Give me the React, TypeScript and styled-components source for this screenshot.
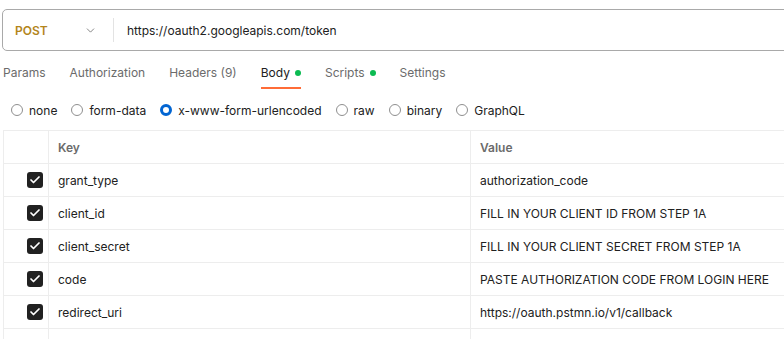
import styled, { createGlobalStyle } from "styled-components";
import { ChevronDown, Check } from "lucide-react";

const GlobalStyle = createGlobalStyle`
    html, body {
        margin:0;
        padding:0;
        background:#ffffff;
        overflow:hidden;
    }
    body {
        font-family: Inter, "Noto Sans", "Liberation Sans", sans-serif;
        font-size:12px;
        color:#212121;
    }
`
const Page = styled.div`
    width:784px;
    height:339px;
    overflow:hidden;
`
const UrlBar = styled.div`
    display:flex;
    align-items:center;
    box-sizing:border-box;
    width:820px;
    height:42px;
    margin:9px 0 0 2px;
    border:1px solid #a9a9a9;
    border-radius:5px;
`
const MethodSelect = styled.div`
    display:flex;
    align-items:center;
    justify-content:space-between;
    box-sizing:border-box;
    width:110px;
    padding:0 16px 0 12px;
    color:#b3851b;
    font-weight:600;
    font-size:12px;
`
const Divider = styled.div`
    width:1px;
    height:24px;
    background:#e3e3e3;
`
const UrlText = styled.div`
    padding-left:13px;
    font-size:12px;
    color:#212121;
`
const Tabs = styled.div`
    display:flex;
    gap:24px;
    margin:7px 0 0 3px;
`
const Tab = styled.div<{ $active?: boolean }>`
    display:flex;
    align-items:center;
    gap:5px;
    padding:7px 0 6px;
    line-height:16px;
    font-size:12px;
    color:${(p) => (p.$active ? "#212121" : "#6b6b6b")};
    border-bottom:2px solid ${(p) => (p.$active ? "#ff6c37" : "transparent")};
`
const Dot = styled.span`
    width:6px;
    height:6px;
    border-radius:50%;
    background:#0cbb52;
`
const RadioRow = styled.div`
    display:flex;
    align-items:center;
    gap:14px;
    height:18px;
    margin:12px 0 0 11px;
`
const RadioItem = styled.label`
    display:flex;
    align-items:center;
    gap:6px;
    font-size:12px;
    color:#212121;
`
const RadioCircle = styled.span<{ $checked?: boolean }>`
    box-sizing:border-box;
    width:12px;
    height:12px;
    border-radius:50%;
    border:${(p) => (p.$checked ? "3.5px solid #0265d2" : "1px solid #8f8f8f")};
    background:#fff;
`
const Table = styled.div`
    margin:11px 0 0 3px;
    width:840px;
    border-top:1px solid #ededed;
    border-left:1px solid #ededed;
`
const Row = styled.div`
    display:grid;
    grid-template-columns:45px 422px 1fr;
    height:33px;
    box-sizing:border-box;
    border-bottom:1px solid #ededed;
`
const Cell = styled.div<{ $head?: boolean }>`
    display:flex;
    align-items:center;
    padding-left:9px;
    border-right:1px solid #ededed;
    font-size:12px;
    font-weight:${(p) => (p.$head ? 600 : 400)};
    color:${(p) => (p.$head ? "#6b6b6b" : "#212121")};
    white-space:nowrap;
`
const CheckCell = styled.div`
    display:flex;
    align-items:center;
    justify-content:flex-end;
    padding-right:5px;
    border-right:1px solid #ededed;
`
const CheckBox = styled.span`
    display:flex;
    align-items:center;
    justify-content:center;
    width:16px;
    height:16px;
    border-radius:3px;
    background:#212121;
    color:#fff;
`

const params = [
    { key: "grant_type", value: "authorization_code" },
    { key: "client_id", value: "FILL IN YOUR CLIENT ID FROM STEP 1A" },
    { key: "client_secret", value: "FILL IN YOUR CLIENT SECRET FROM STEP 1A" },
    { key: "code", value: "PASTE AUTHORIZATION CODE FROM LOGIN HERE" },
    { key: "redirect_uri", value: "https://oauth.pstmn.io/v1/callback" },
]

const bodyTypes = ["none", "form-data", "x-www-form-urlencoded", "raw", "binary", "GraphQL"]

const App = () => {
    return (
        <Page>
            <GlobalStyle />
            <UrlBar>
                <MethodSelect>
                    <span>POST</span>
                    <ChevronDown size={13} strokeWidth={1.5} color="#6b6b6b" />
                </MethodSelect>
                <Divider />
                <UrlText>https://oauth2.googleapis.com/token</UrlText>
            </UrlBar>
            <Tabs>
                <Tab>Params</Tab>
                <Tab>Authorization</Tab>
                <Tab>Headers (9)</Tab>
                <Tab $active>Body<Dot /></Tab>
                <Tab>Scripts<Dot /></Tab>
                <Tab>Settings</Tab>
            </Tabs>
            <RadioRow>
                {bodyTypes.map((t) => (
                    <RadioItem key={t}>
                        <RadioCircle $checked={t === "x-www-form-urlencoded"} />
                        {t}
                    </RadioItem>
                ))}
            </RadioRow>
            <Table>
                <Row>
                    <CheckCell />
                    <Cell $head>Key</Cell>
                    <Cell $head>Value</Cell>
                </Row>
                {params.map((p) => (
                    <Row key={p.key}>
                        <CheckCell>
                            <CheckBox><Check size={12} strokeWidth={3.5} /></CheckBox>
                        </CheckCell>
                        <Cell>{p.key}</Cell>
                        <Cell>{p.value}</Cell>
                    </Row>
                ))}
                <Row>
                    <CheckCell />
                    <Cell />
                    <Cell />
                </Row>
            </Table>
        </Page>
    )
}
export default App
